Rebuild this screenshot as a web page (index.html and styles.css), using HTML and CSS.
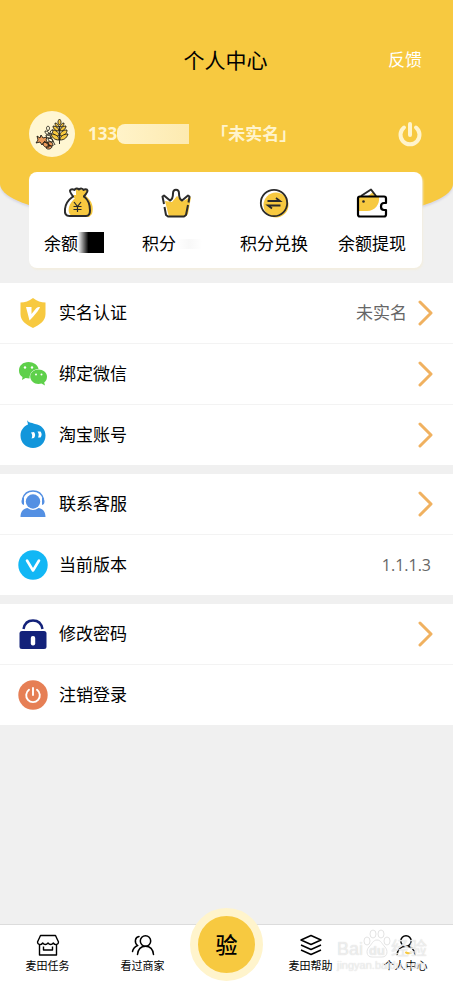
FILE: index.html
```html
<!DOCTYPE html>
<html lang="zh-CN">
  <head>
    <meta charset="UTF-8" />
    <meta name="viewport" content="width=device-width, initial-scale=1.0" />
    <title>个人中心</title>
    <link rel="stylesheet" href="styles.css">
  </head>

  <body>
    <header class="header">
      <div class="topbar">
        <h1 class="title">个人中心</h1>
        <a href="#" class="feedback">反馈</a>
      </div>
      <div class="profile">
        <span class="avatar">
          <svg width="46" height="46" viewBox="0 0 46 46">
            <g stroke="#1d1a12" stroke-width="0.900" stroke-linejoin="round">
              <g fill="#f7c940">
                <path d="M30 25c-4 0-7-2-7-6 4 0 7 2 7 6zM31 25c4 0 7-2 7-6-4 0-7 2-7 6z"/>
                <path d="M30 20c-3 0-6-2-6-5 3 0 6 2 6 5zM31 20c3 0 6-2 6-5-3 0-6 2-6 5z"/>
                <path d="M30 29c-5 0-7-3-8-6 4 0 8 2 8 6zM31 29c5 0 7-3 8-6-4 0-8 2-8 6z"/>
                <path d="M30 16c-3 0-4-2-4-4 2 0 4 2 4 4zM31 16c3 0 4-2 4-4-2 0-4 2-4 4z"/>
                <path d="M30.500 14c-2-2-2-4 0-6 2 2 2 4 0 6z"/>
              </g>
              <path d="M30.500 15v18" fill="none"/>
              <g fill="#fff8d8">
                <path d="M19 20c-2-2-2-4 0-5 2 1 2 3 0 5zM20 23c-3 1-4-1-4-3 2 0 4 1 4 3zM21 23c0-3 1-4 3-4 0 2-1 4-3 4zM22 27c-3 1-5-1-5-3 3 0 5 1 5 3zM24 31c-3 0-5-1-5-4 3 0 5 1 5 4z"/>
              </g>
              <g fill="#eb9b5b">
                <path d="M8 25l3 2 1-3 2 3 4-1-1 3 2 3-4-1-2 3-2-3-4 1 2-3z"/>
                <path d="M14 32c4-2 6 0 6 4-4 1-6-1-6-4zM17 37c1-3 4-3 6-1-1 2-4 3-6 1zM19 31c3-1 5 1 5 4-3 0-5-1-5-4z"/>
              </g>
              <path d="M15 30l6 5M20 22l6 12" fill="none"/>
            </g>
          </svg>
        </span>
        <span class="phone">133</span><span class="phone-mask"></span>
        <span class="status">「未实名」</span>
        <button class="power" aria-label="退出">
          <svg width="24" height="26" viewBox="0 0 24 26" fill="none" stroke="#fff4cc" stroke-width="4" stroke-linecap="round">
            <path d="M6 6.500a9.500 9.500 0 1 0 12 0M12 3v11"/>
          </svg>
        </button>
      </div>
    </header>

    <section class="card">
      <a href="#" class="card-item">
        <svg width="32" height="32" viewBox="0 0 32 32">
          <path d="M14 2l12 1-2 6c6 5 8 11 6 18l-3 3H12c-5-2-6-5-5-10 1-4 4-7 7-10z" fill="#f7c940"/>
          <path d="M11 9.500h11c4 3 6 8 6 14 0 4-2 5.500-4 5.500H7.500C4 29 2.500 27 3 22c.5-5 3-9 8-12.500-1-2-3.500-4-3-6C9 1.500 11 2 12.500 3c1-2 3-2 4.500-.5 2-1.500 3.500-1 4.500.5 1.500-1 3.500-1 4 .5.5 2-2.500 4-3.500 6" fill="none" stroke="#2b2b2b" stroke-width="2" stroke-linejoin="round"/>
          <path d="M12 9.500h9" stroke="#f7c940" stroke-width="3"/>
          <path d="M12 15l3.500 4.500L19 15M15.500 19.500V25M11.500 19.500h8M11.500 22.500h8" fill="none" stroke="#2b2b2b" stroke-width="1.200"/>
        </svg>
        <span>余额<i class="ink-mask"></i></span>
      </a>
      <a href="#" class="card-item">
        <svg width="32" height="32" viewBox="0 0 32 32">
          <path d="M5 14l7 1 5-6 6 5 8-4-3 17-3 3H9z" fill="#f7c940"/>
          <path d="M4 17L2.500 9.500 4 8.500l6 5c2-1 3-4 3-7C13 1.500 19 1.500 19 6.500c0 3 1 6 3 7l6-5 1.500 1-1 6M28 18l-2 10-2 1.500H8L6 28 4.500 20" fill="none" stroke="#2b2b2b" stroke-width="2" stroke-linejoin="round"/>
        </svg>
        <span>积分<i class="points-mask"></i></span>
      </a>
      <a href="#" class="card-item">
        <svg width="32" height="32" viewBox="0 0 32 32">
          <circle cx="18" cy="18" r="12.500" fill="#f7c940"/>
          <circle cx="16" cy="16" r="13.200" fill="none" stroke="#2b2b2b" stroke-width="1.800"/>
          <path d="M9.500 14h12.500l-4-3M22.500 18.500H10l4 3" fill="none" stroke="#2b2b2b" stroke-width="1.800"/>
        </svg>
        <span>积分兑换</span>
      </a>
      <a href="#" class="card-item">
        <svg width="32" height="32" viewBox="0 0 32 32">
          <path d="M3 10h20c1 7-4 14-12 14H3z" fill="#f7c940"/>
          <path d="M12 9l5-4 4 4z" fill="#f7c940"/>
          <path d="M5 9l10-6.500L20 9" fill="none" stroke="#2b2b2b" stroke-width="2" stroke-linejoin="round"/>
          <path d="M4 9.500h24c1.500 0 2 .5 2 2V16h-2c-4 0-4 7 0 7h2v4.500c0 1.500-.5 2-2 2H4c-1.500 0-2-.5-2-2v-16c0-1.500.5-2 2-2z" fill="none" stroke="#000" stroke-width="2.200" stroke-linejoin="round"/>
          <circle cx="7.500" cy="14.500" r="1.300" fill="#2b2b2b"/>
        </svg>
        <span>余额提现</span>
      </a>
    </section>

    <main class="menu">
      <div class="group">
        <a href="#" class="row">
          <svg class="row-icon" width="30" height="30" viewBox="0 0 30 30">
            <path d="M15 0c4 3 8 4.500 12.500 4.500V16c0 7-6 11-12.500 14C8.500 27 2.500 23 2.500 16V4.500C7 4.500 11 3 15 0z" fill="#f7c940"/>
            <path d="M8 9h5.500v7L18 10.500c1-1.500 2.500-1.500 4-1.500-1 3-5 8-10.500 13.500z" fill="#fff"/>
          </svg>
          <span class="row-text">实名认证</span>
          <span class="row-value">未实名</span>
          <svg class="arrow" width="16" height="26" viewBox="0 0 16 26"><path d="M2 2l11 11L2 24"/></svg>
        </a>
        <a href="#" class="row">
          <svg class="row-icon" width="30" height="30" viewBox="0 0 30 30">
            <path d="M10.500 3C5 3 1 6.500 1 11.500c0 3 1 5 3.500 6.500l-.5 3 3.500-2 4 .5c0-6 4-9.500 9-9.500C20 6 15.500 3 10.500 3z" fill="#5ed04a"/>
            <path d="M20.500 10.500c-4.500 0-8.300 3-8.300 7s3.800 7.500 8.300 7.500l3-.5 3.500 2-.8-3c2-1.500 2.800-3.500 2.800-6 0-4-4-7-8.500-7z" fill="#5ed04a"/>
            <g fill="#fff"><circle cx="7" cy="8.500" r="1.200"/><circle cx="14" cy="8.500" r="1.200"/><circle cx="18" cy="15.500" r="1"/><circle cx="23.500" cy="15.500" r="1"/></g>
          </svg>
          <span class="row-text">绑定微信</span>
          <svg class="arrow" width="16" height="26" viewBox="0 0 16 26"><path d="M2 2l11 11L2 24"/></svg>
        </a>
        <a href="#" class="row">
          <svg class="row-icon" width="30" height="30" viewBox="0 0 30 30">
            <path d="M9 0c1 2.500 4 2.500 8 4 6 1 10.500 5 10.500 11.500C27.500 23 22 28 15 28S2.500 23 2.500 15.500c0-5 3-9 7.500-11z" fill="#1296db"/>
            <path d="M13 12.500l3-.5c1.500 2 1.500 4 0 6l-2.500.5c1-2 1-4-.5-6zM19.500 11.500h3c1.500 2 1.500 4 0 6H20c1-2 1-4-.5-6z" fill="#fff"/>
          </svg>
          <span class="row-text">淘宝账号</span>
          <svg class="arrow" width="16" height="26" viewBox="0 0 16 26"><path d="M2 2l11 11L2 24"/></svg>
        </a>
      </div>

      <div class="group">
        <a href="#" class="row">
          <svg class="row-icon" width="30" height="30" viewBox="0 0 30 30">
            <circle cx="15" cy="12.500" r="7.200" fill="#5490e3"/>
            <path d="M4.500 10C6 5 10 2 15 2s9 3 10.500 8" fill="none" stroke="#5490e3" stroke-width="1.300"/>
            <path d="M6 8.500v7.500c-2-.5-2.500-2-2.500-3.500S4 9.500 6 8.500zM24 8.500v7.500c2-.5 2.500-2 2.500-3.500S26 9.500 24 8.500z" fill="#5490e3"/>
            <path d="M2.500 28c0-5 2.500-8.500 7-9 3.500 2.500 7.500 2.500 11 0 4.500.5 7 4 7 9z" fill="#5490e3"/>
          </svg>
          <span class="row-text">联系客服</span>
          <svg class="arrow" width="16" height="26" viewBox="0 0 16 26"><path d="M2 2l11 11L2 24"/></svg>
        </a>
        <div class="row">
          <svg class="row-icon" width="30" height="30" viewBox="0 0 30 30">
            <circle cx="15" cy="15" r="14.700" fill="#12b7f5"/>
            <path d="M9 10.500l6 10 6-10" fill="none" stroke="#fff" stroke-width="2.600" stroke-linecap="round" stroke-linejoin="round"/>
          </svg>
          <span class="row-text">当前版本</span>
          <span class="version">1.1.1.3</span>
        </div>
      </div>

      <div class="group">
        <a href="#" class="row">
          <svg class="row-icon" width="30" height="30" viewBox="0 0 30 30">
            <path d="M5.500 10C6.500 4.500 10 1.500 15 1.500s8.500 3 9.500 8.500" fill="none" stroke="#13227a" stroke-width="2.400"/>
            <rect x="1.500" y="12" width="27" height="18" rx="2.500" fill="#13227a"/>
            <rect x="12.800" y="17" width="4.400" height="9.500" rx="2" fill="#fff"/>
          </svg>
          <span class="row-text">修改密码</span>
          <svg class="arrow" width="16" height="26" viewBox="0 0 16 26"><path d="M2 2l11 11L2 24"/></svg>
        </a>
        <a href="#" class="row">
          <svg class="row-icon" width="30" height="30" viewBox="0 0 30 30">
            <circle cx="15" cy="15" r="14.700" fill="#e67f55"/>
            <path d="M11 9.800a6.800 6.800 0 1 0 8 0M15 8v7" fill="none" stroke="#fff" stroke-width="1.900" stroke-linecap="round"/>
          </svg>
          <span class="row-text">注销登录</span>
        </a>
      </div>
    </main>

    <nav class="tabbar">
      <a href="#" class="tab">
        <svg width="24" height="24" viewBox="0 0 24 24" fill="none" stroke="#000" stroke-width="1.400" stroke-linejoin="round">
          <path d="M4.500 2.500h15L22.500 9c0 3-3.500 3.500-5.200 1-1.500 2-3.800 2-5.300 0-1.500 2-3.800 2-5.300 0-1.700 2.500-5.200 2-5.200-1zM3.500 12v10h17v-10M7.500 13.500v3.500h9v-3.500"/>
        </svg>
        <span>麦田任务</span>
      </a>
      <a href="#" class="tab">
        <svg width="24" height="24" viewBox="0 0 24 24" fill="none" stroke="#000" stroke-width="1.500" stroke-linecap="round">
          <circle cx="14.500" cy="8" r="5.200"/>
          <path d="M6.500 21.500c.5-5 3.500-8.300 8-8.300s7.500 3.300 8 8.300M8 3.500C4 4 3 9.500 6.500 12.500 3.500 14 2 16 1.500 18.500"/>
        </svg>
        <span>看过商家</span>
      </a>
      <button class="verify">验</button>
      <a href="#" class="tab">
        <svg width="24" height="24" viewBox="0 0 24 24" fill="none" stroke="#000" stroke-width="1.500" stroke-linejoin="round">
          <path d="M12 2.500l10 4.500-10 4.500-10-4.500zM2 12l10 4.500 10-4.500M2 17l10 4.500 10-4.500"/>
        </svg>
        <span>麦田帮助</span>
      </a>
      <a href="#" class="tab">
        <svg width="24" height="24" viewBox="0 0 24 24" fill="none" stroke="#000" stroke-width="1.500" stroke-linecap="round">
          <circle cx="12" cy="8" r="5.200"/>
          <path d="M3 21.500c.5-5 4-8.300 9-8.300s8.500 3.300 9 8.300"/>
          <path d="M12 19.500q3 1.500 5 0" stroke="#f7c940" stroke-width="2"/>
        </svg>
        <span>个人中心</span>
      </a>
      <div class="watermark">
        <div class="mark-name">Bai<span class="paw"><svg width="28" height="30" viewBox="0 0 28 30"><ellipse cx="4" cy="12" rx="3" ry="4"/><ellipse cx="10" cy="5" rx="3" ry="4"/><ellipse cx="18" cy="5" rx="3" ry="4"/><ellipse cx="24" cy="12" rx="3" ry="4"/><path d="M14 11c4 0 5 4 8 7s3 10-3 10H9c-6 0-6-7-3-10s4-7 8-7z"/></svg><b>du</b></span>经验</div>
        <div class="mark-url">jingyan.baidu.com</div>
      </div>
    </nav>
  </body>
</html>
```

FILE: styles.css
```css
* {
  margin: 0;
  padding: 0;
  box-sizing: border-box;
}

body {
  display: flex;
  flex-direction: column;
  min-height: 100vh;
  background-color: #f0f0f0;
  color: #000;
  font-family: "Open Sans", "Noto Sans CJK SC", sans-serif;
  font-size: 17px;
  line-height: 24px;
}

a {
  color: inherit;
  text-decoration: none;
}

button {
  border: none;
  background: none;
  font-family: inherit;
  cursor: pointer;
}

svg {
  display: block;
}

/* header */
.header {
  height: 227px;
  padding: 44px 31px 0 29px;
  background-color: #f7c940;
  border-radius: 0 0 50% 50% / 0 0 43px 43px;
  box-shadow: 0 2px 2px #d9d9e6;
}

.topbar {
  display: grid;
  grid-template-columns: 1fr auto 1fr;
  align-items: center;
  height: 32px;
}

.title {
  grid-column: 2;
  font-size: 21px;
  font-weight: normal;
}

.feedback {
  justify-self: end;
  color: #fff;
}

.profile {
  display: flex;
  align-items: center;
  margin-top: 35px;
  color: #fff4cc;
  font-weight: bold;
}

.avatar {
  width: 46px;
  height: 46px;
  margin-right: 13px;
  border-radius: 50%;
  background-color: #fff6d2;
}

.phone-mask {
  width: 72px;
  height: 20px;
  margin-right: 22px;
  border-radius: 8px 0 0 8px;
  background: linear-gradient(to right, #fff3c9, #fdeab0);
}

.power {
  margin-left: auto;
}

/* balance card */
.card {
  position: relative;
  display: grid;
  grid-template-columns: repeat(4, 1fr);
  height: 96px;
  margin: -55px 31px 15px 29px;
  padding: 15px 1px 0 0;
  border-radius: 8px;
  background-color: #fff;
  box-shadow: 1px 2px 2px #f3eee0;
}

.card-item {
  display: flex;
  flex-direction: column;
  align-items: center;
  gap: 13px;
}

.card-item span {
  display: flex;
  align-items: center;
  width: 68px;
  white-space: nowrap;
}

.ink-mask {
  align-self: flex-start;
  width: 26px;
  height: 21px;
  background: linear-gradient(to right, transparent, #000 40%);
}

.points-mask {
  width: 26px;
  height: 10px;
  background: linear-gradient(to right, transparent, #f8f8f8, transparent);
}

/* menu */
.menu {
  display: flex;
  flex-direction: column;
  gap: 9px;
}

.group {
  background-color: #fff;
}

.row {
  display: flex;
  align-items: center;
  height: 60px;
  padding: 0 19px 0 18px;
}

.row + .row {
  height: 61px;
  border-top: 1px solid #f3f3f3;
}

.row-icon {
  margin-right: 11px;
}

.row-text {
  flex: 1;
}

.row-value {
  margin-right: 11px;
  color: #666;
}

.version {
  margin-right: 3px;
  color: #666;
  font-size: 16px;
}

.arrow {
  fill: none;
  stroke: #f0b160;
  stroke-width: 3;
  stroke-linecap: round;
  stroke-linejoin: round;
}

/* bottom tabs */
.tabbar {
  position: relative;
  display: flex;
  align-items: flex-end;
  height: 57px;
  margin-top: auto;
  border-top: 1px solid #dcdcdc;
  background-color: #fff;
}

.tab {
  flex: 1;
  display: flex;
  flex-direction: column;
  align-items: center;
  height: 56px;
  padding-top: 8px;
  font-size: 11px;
  line-height: 18px;
}

.verify {
  width: 73px;
  height: 73px;
  padding-bottom: 4px;
  border: 8px solid #fff4cc;
  border-radius: 50%;
  background-color: #f7c940;
  font-size: 22px;
  font-weight: 500;
}

.watermark {
  position: absolute;
  right: 26px;
  bottom: 10px;
  color: rgba(255, 255, 255, 0.6);
  font-family: "Liberation Sans", "Noto Sans CJK SC", sans-serif;
  text-shadow: 0 0 1px #ccc;
  pointer-events: none;
}

.mark-name {
  display: flex;
  align-items: flex-end;
  font-size: 18px;
  line-height: 20px;
}

.paw {
  position: relative;
}

.paw svg {
  fill: rgba(255, 255, 255, 0.6);
  stroke: #e4e4e4;
}

.paw b {
  position: absolute;
  left: 6px;
  bottom: 0;
  font-size: 13px;
  line-height: 16px;
}

.mark-url {
  font-size: 11px;
  line-height: 12px;
}
```
